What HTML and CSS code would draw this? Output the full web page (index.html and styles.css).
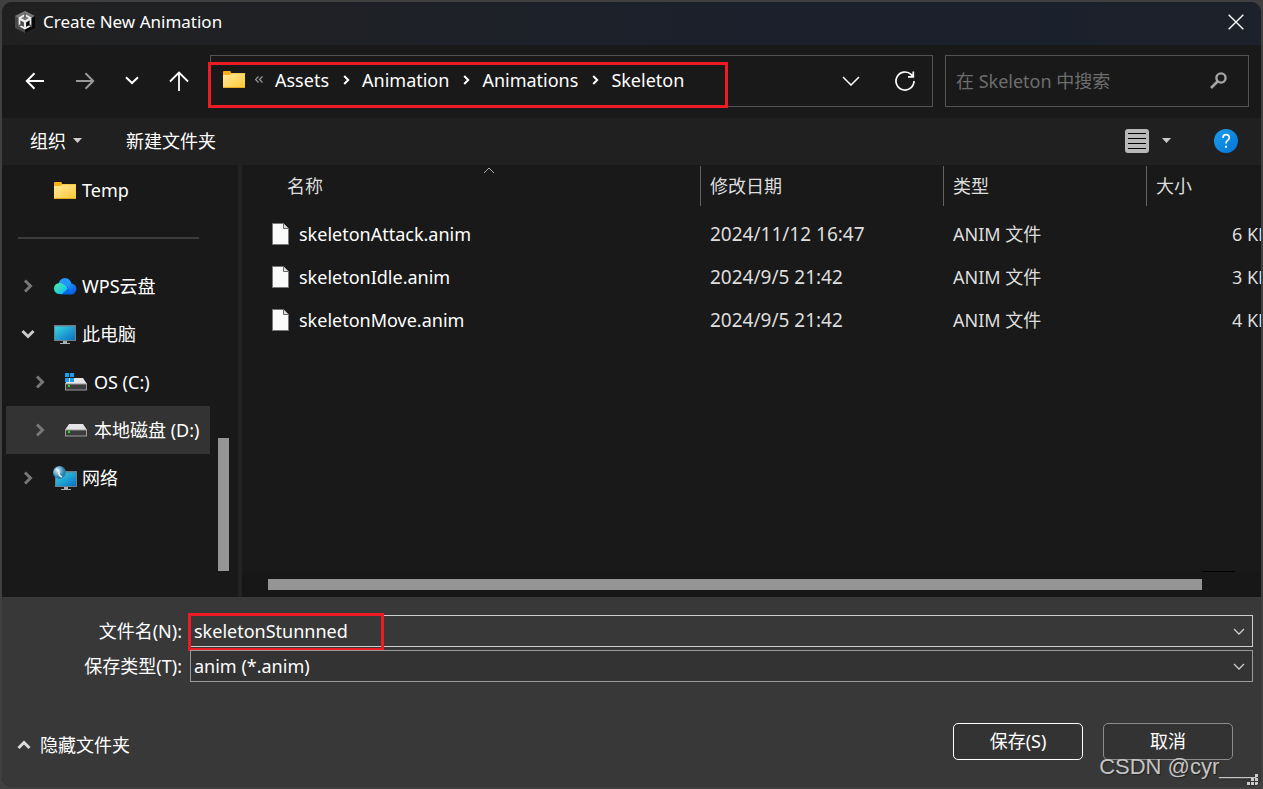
FILE: index.html
```
<!DOCTYPE html>
<html lang="zh-CN">
<head>
<meta charset="utf-8">
<title>Create New Animation</title>
<link rel="stylesheet" href="styles.css">
</head>
<body>
<svg class="defs" aria-hidden="true">
  <defs>
    <linearGradient id="gFolder" x1="0" y1="0" x2="1" y2="1"><stop offset="0" stop-color="#ffe9a0"/><stop offset="1" stop-color="#ffc832"/></linearGradient>
    <linearGradient id="gScreen" x1="0" y1="0" x2="1" y2="1"><stop offset="0" stop-color="#38d6e4"/><stop offset="1" stop-color="#0a6fc2"/></linearGradient>
    <linearGradient id="gHelp" x1="0" y1="0" x2="1" y2="1"><stop offset="0" stop-color="#1aa0ee"/><stop offset="1" stop-color="#0672d4"/></linearGradient>
    <linearGradient id="gCloudL" x1="0" y1="0" x2="1" y2="1"><stop offset="0" stop-color="#4df0a0"/><stop offset="1" stop-color="#08b6ff"/></linearGradient>
    <linearGradient id="gCloudR" x1="0" y1="0" x2="1" y2="1"><stop offset="0" stop-color="#2aa8ff"/><stop offset="1" stop-color="#0048d8"/></linearGradient>
    <radialGradient id="gGlobe" cx=".35" cy=".35"><stop offset="0" stop-color="#d8f0fa"/><stop offset="1" stop-color="#2a7fb0"/></radialGradient>
    <symbol id="folder" viewBox="0 0 22 17"><path d="M0 16V1q0-1 1-1h6q1 0 1 2h14v14z" fill="#f9b115"/><path d="M0 4h7l1-1.500h14V16q0 .8-1 .8H1q-1 0-1-.8z" fill="url(#gFolder)"/><path d="M0 16.500h22" stroke="#e5a91e"/></symbol>
    <symbol id="file" viewBox="0 0 17 22"><path d="M.5.500h11l5 5v16H.500z" fill="#fafafa" stroke="#777"/><path d="M11.500.500v5h5" fill="#ddd" stroke="#666"/></symbol>
    <symbol id="drive" viewBox="0 0 22 13"><path d="M4 0h14l4 6H0z" fill="#e4e4e6"/><path d="M0 5.500h22v7H0z" fill="#9a9a9a"/><path d="M1 6.500h20v5H1z" fill="#3c3c3c"/><path d="M3 7h2v2H3z" fill="#22e022"/></symbol>
    <symbol id="pc" viewBox="0 0 22 19"><path d="M0 0h22v16H0z" fill="#6d7f88"/><path d="M1 1.500h20V15H1z" fill="url(#gScreen)"/><path d="M9 16h4v2h3v1H6v-1h3z" fill="#a8b0b4"/></symbol>
    <symbol id="right" viewBox="0 0 10 14"><path d="M2 1.500l5.500 5.500L2 12.500" fill="none" stroke="currentColor" stroke-width="3"/></symbol>
    <symbol id="down" viewBox="0 0 12 7"><path d="M1 1l5 5 5-5" fill="none" stroke="currentColor" stroke-width="1.300"/></symbol>
    <symbol id="crumb" viewBox="0 0 7 10"><path d="M1.200 1l4 4-4 4" fill="none" stroke="#fff" stroke-width="2"/></symbol>
  </defs>
</svg>
<main class="dialog">
  <header class="titlebar">
    <svg class="logo" width="20" height="22" viewBox="0 0 20 22"><path d="M10 0l10 5v12l-10 5L0 17V5z" fill="#4a4a4a"/><path d="M10 0l10 5-10 6L0 5z" fill="#777"/><path d="M20 5v12l-10 5V11z" fill="#080808"/><path d="M10 4l5.500 3v7.500L10 17.500l-5.500-3V7z" fill="none" stroke="#eee" stroke-width="1.800"/><path d="M10 10.800v6M10 10.800L5 7.800M10 10.800l5-3" fill="none" stroke="#eee" stroke-width="2.200"/><path d="M10 2.500v4M3 15.500l3-1.800M17 15.500l-3-1.800" stroke="#555" stroke-width="1.600"/></svg>
    <h1 class="title">Create New Animation</h1>
    <button class="plain close" aria-label="关闭"><svg width="16" height="16" viewBox="0 0 16 16"><path d="M.7.700l14.600 14.600M15.300.700L.7 15.300" stroke="#fff" stroke-width="1.400"/></svg></button>
  </header>

  <nav class="navbar">
    <div class="nav-buttons">
      <button class="plain" aria-label="返回"><svg width="20" height="18" viewBox="0 0 20 18"><path d="M19 9H2M9.500 1.300L1.800 9l7.700 7.700" fill="none" stroke="#fff" stroke-width="2"/></svg></button>
      <button class="plain" aria-label="前进"><svg width="20" height="18" viewBox="0 0 20 18"><path d="M1 9h17M10.500 1.300L18.200 9l-7.700 7.700" fill="none" stroke="#999" stroke-width="2"/></svg></button>
      <button class="plain" aria-label="最近位置"><svg width="14" height="9" viewBox="0 0 14 9"><path d="M1 1.300l6 5.700 6-5.700" fill="none" stroke="#fff" stroke-width="2"/></svg></button>
      <button class="plain" aria-label="向上"><svg width="20" height="20" viewBox="0 0 20 20"><path d="M10 20V2M1 10.500L10 1.500l9 9" fill="none" stroke="#fff" stroke-width="1.800"/></svg></button>
    </div>
    <div class="address">
      <svg class="address-icon" width="22" height="17"><use href="#folder"/></svg>
      <svg class="more" width="8" height="7" viewBox="0 0 8 7"><path d="M3.500.500l-3 3 3 3M7.500.500l-3 3 3 3" fill="none" stroke="#999" stroke-width="1.200"/></svg>
      <ol class="crumbs">
        <li><a href="#">Assets</a><svg width="7" height="10"><use href="#crumb"/></svg></li>
        <li><a href="#">Animation</a><svg width="7" height="10"><use href="#crumb"/></svg></li>
        <li><a href="#">Animations</a><svg width="7" height="10"><use href="#crumb"/></svg></li>
        <li><a href="#">Skeleton</a></li>
      </ol>
      <button class="plain address-button" aria-label="以前的位置"><svg width="18" height="10" viewBox="0 0 18 10"><path d="M1 1l8 8 8-8" fill="none" stroke="#fff" stroke-width="1.500"/></svg></button>
      <button class="plain address-button" aria-label="刷新"><svg width="20" height="20" viewBox="0 0 20 20"><path d="M19 10a9 9 0 1 1-2.700-6.400L18 5.500M18.300.500v5.300H13" fill="none" stroke="#fff" stroke-width="1.700"/></svg></button>
      <span class="mark mark-path"></span>
    </div>
    <div class="search">
      <input class="search-input" type="search" aria-label="搜索" placeholder="在 Skeleton 中搜索">
      <svg width="17" height="17" viewBox="0 0 17 17"><circle cx="11" cy="6" r="4.600" fill="none" stroke="#a5a5a5" stroke-width="2.400"/><path d="M7.500 9.500L1 16" stroke="#a5a5a5" stroke-width="2.600"/></svg>
    </div>
  </nav>

  <div class="toolbar">
    <button class="plain">组织<svg class="caret" width="9" height="5" viewBox="0 0 9 5"><path d="M0 0h9L4.500 5z" fill="#ccc"/></svg></button>
    <button class="plain new-folder">新建文件夹</button>
    <button class="plain view" aria-label="更改视图"><svg width="24" height="24" viewBox="0 0 24 24"><rect width="24" height="24" rx="3" fill="#b8b8b8"/><path d="M3 4.500h18M3 9.500h18M3 14.500h18M3 19.500h18" stroke="#000"/></svg><svg class="view-caret" width="9" height="5" viewBox="0 0 9 5"><path d="M0 0h9L4.500 5z" fill="#ccc"/></svg></button>
    <button class="plain help" aria-label="帮助"><svg width="24" height="24" viewBox="0 0 24 24"><circle cx="12" cy="12" r="12" fill="url(#gHelp)"/><path d="M9 9q0-3.300 3.100-3.300T15.200 8.800q0 1.600-1.600 2.600T12 14.500" fill="none" stroke="#fff" stroke-width="1.700"/><path d="M11 16.800h2v2h-2z" fill="#fff"/></svg></button>
  </div>

  <div class="content">
    <aside class="sidebar">
      <ul class="tree">
        <li class="node"><span class="twisty"></span><svg class="node-icon" width="22" height="17"><use href="#folder"/></svg>Temp</li>
        <li class="rule" role="separator"></li>
        <li class="node"><svg class="twisty" width="10" height="14"><use href="#right"/></svg><svg class="node-icon" width="23" height="17" viewBox="0 0 23 17"><circle cx="11.500" cy="6.500" r="6.500" fill="#2298ff"/><circle cx="17.500" cy="11" r="5.500" fill="url(#gCloudR)"/><path d="M7 16.500h10L14 8z" fill="#0062e6"/><path d="M6 5q4 0 8.500 5.500L8.500 16H6a5.500 5.500 0 0 1 0-11z" fill="url(#gCloudL)"/></svg>WPS云盘</li>
        <li class="node"><svg class="twisty open" width="14" height="10" viewBox="0 0 14 10"><path d="M1.500 2L7 7.500 12.500 2" fill="none" stroke="currentColor" stroke-width="3"/></svg><svg class="node-icon" width="22" height="19"><use href="#pc"/></svg>此电脑</li>
        <li class="node child"><svg class="twisty" width="10" height="14"><use href="#right"/></svg><svg class="node-icon" width="22" height="18" viewBox="0 0 22 18"><use href="#drive" y="5" width="22" height="13"/><path d="M0 0h4v4H0zM5 0h4v4H5zM0 5h4v4H0zM5 5h4v4H5z" fill="#1c9ff0"/></svg>OS (C:)</li>
        <li class="node child selected"><svg class="twisty" width="10" height="14"><use href="#right"/></svg><svg class="node-icon" width="22" height="13"><use href="#drive"/></svg>本地磁盘 (D:)</li>
        <li class="node"><svg class="twisty" width="10" height="14"><use href="#right"/></svg><svg class="node-icon" width="24" height="24" viewBox="0 0 24 24"><use href="#pc" x="2" y="5" width="22" height="19"/><circle cx="6.500" cy="6.500" r="6.500" fill="url(#gGlobe)"/><path d="M3 3q4 2 3 4t3 4" fill="none" stroke="#e6f6fc" stroke-width="1.500"/></svg>网络</li>
      </ul>
      <div class="v-track"><div class="v-thumb"></div></div>
    </aside>
    <section class="files">
      <table class="file-table">
        <colgroup><col><col class="col-date"><col class="col-type"><col class="col-size"></colgroup>
        <thead>
          <tr><th><div class="head first">名称<svg class="sort" width="12" height="7" viewBox="0 0 12 7"><path d="M1 6l5-5 5 5" fill="none" stroke="#aaa"/></svg></div></th><th><div class="head">修改日期</div></th><th><div class="head">类型</div></th><th><div class="head">大小</div></th></tr>
        </thead>
        <tbody>
          <tr><td><span class="file"><svg width="17" height="22"><use href="#file"/></svg>skeletonAttack.anim</span></td><td class="date">2024/11/12 16:47</td><td>ANIM 文件</td><td class="size">6 KB</td></tr>
          <tr><td><span class="file"><svg width="17" height="22"><use href="#file"/></svg>skeletonIdle.anim</span></td><td class="date">2024/9/5 21:42</td><td>ANIM 文件</td><td class="size">3 KB</td></tr>
          <tr><td><span class="file"><svg width="17" height="22"><use href="#file"/></svg>skeletonMove.anim</span></td><td class="date">2024/9/5 21:42</td><td>ANIM 文件</td><td class="size">4 KB</td></tr>
        </tbody>
      </table>
      <div class="h-track"><div class="h-thumb"></div><div class="h-rest"></div></div>
    </section>
  </div>

  <footer class="footer">
    <div class="fields">
      <label for="filename">文件名(N):</label>
      <div class="combo bright">
        <input id="filename" class="combo-control" type="text" value="skeletonStunnned">
        <svg class="combo-arrow" width="12" height="7"><use href="#down"/></svg>
        <span class="mark mark-name"></span>
      </div>
      <label for="filetype">保存类型(T):</label>
      <div class="combo">
        <select id="filetype" class="combo-control"><option>anim (*.anim)</option></select>
        <svg class="combo-arrow" width="12" height="7"><use href="#down"/></svg>
      </div>
    </div>
    <div class="actions">
      <button class="plain hide-folders"><svg width="14" height="10" viewBox="0 0 14 10"><path d="M1.500 8L7 2.500 12.500 8" fill="none" stroke="#ddd" stroke-width="3"/></svg>隐藏文件夹</button>
      <button class="action primary">保存(S)</button>
      <button class="action">取消</button>
    </div>
    <span class="watermark">CSDN @cyr___</span>
    <svg class="grip" width="11" height="11" viewBox="0 0 11 11"><path d="M8 0h3v3H8zM4 4h3v3H4zM8 4h3v3H8zM0 8h3v3H0zM4 8h3v3H4zM8 8h3v3H8z" fill="#ccc"/></svg>
  </footer>
</main>
</body>
</html>
```
FILE: styles.css
```
* { box-sizing: border-box; }

body {
  margin: 0;
  height: 100vh;
  padding: 2px;
  background: #404040;
  color: #fff;
  font: 18px/24px "Noto Sans", "Noto Sans CJK SC", sans-serif;
}

svg { display: block; flex: none; }
.defs { position: absolute; width: 0; height: 0; }

button, input, select { font: inherit; color: inherit; }

.plain {
  display: flex;
  align-items: center;
  justify-content: center;
  padding: 0;
  border: 0;
  background: none;
}

.dialog {
  display: flex;
  flex-direction: column;
  height: 100%;
  border-radius: 10px;
  overflow: hidden;
  background: #191919;
}

.titlebar {
  display: flex;
  align-items: center;
  gap: 8px;
  height: 43px;
  padding: 0 17px 3px 13px;
  background: linear-gradient(90deg, #202020, #1f2125 25%, #1b202c 60%, #1b212c 85%, #1d212a);
}
.title { margin: 0; font-size: 17px; font-weight: 400; }
.close { margin-left: auto; }

.navbar {
  display: flex;
  align-items: center;
  height: 73px;
  padding: 0 12px 2px 23px;
}
.nav-buttons {
  display: flex;
  justify-content: space-between;
  width: 164px;
  margin-right: 21px;
}

.address {
  position: relative;
  display: flex;
  align-items: center;
  flex: 1;
  height: 52px;
  padding: 0 0 2px 12px;
  border: 1px solid #535353;
}
.more { margin: 0 12px 0 10px; }
.crumbs {
  display: flex;
  flex: 1;
  margin: 0;
  padding: 0;
  list-style: none;
}
.crumbs li { display: flex; align-items: center; }
.crumbs svg { margin: 0 12px 0 14px; }
.crumbs a { color: #fff; text-decoration: none; }
.address-button { width: 54px; height: 48px; padding-top: 2px; }

.mark {
  position: absolute;
  border: 3px solid #ed1c24;
  pointer-events: none;
}
.mark-path { left: -3px; top: 6px; width: 520px; height: 46px; }
.mark-name { left: -3px; top: -3px; width: 196px; height: 38px; }

.search {
  display: flex;
  align-items: center;
  width: 304px;
  height: 52px;
  margin-left: 12px;
  padding: 0 21px 0 10px;
  border: 1px solid #535353;
}
.search-input {
  flex: 1;
  min-width: 0;
  padding: 0;
  border: 0;
  outline: 0;
  background: none;
}
.search-input::placeholder { color: #6e6e6e; }

.toolbar {
  display: flex;
  align-items: center;
  height: 47px;
  padding: 0 23px 2px 28px;
  background: #202020;
}
.caret { margin-left: 7px; }
.new-folder { margin-left: 44px; }
.view { margin-left: auto; }
.view-caret { margin-left: 13px; }
.help { margin-left: 43px; }

.content { display: flex; flex: 1; min-height: 0; }

.sidebar {
  display: flex;
  width: 240px;
  padding: 1px 0 0 4px;
  border-right: 4px solid #232323;
}
.tree {
  width: 204px;
  margin: 0;
  padding: 0;
  list-style: none;
}
.node {
  display: flex;
  align-items: center;
  height: 48px;
  padding-left: 15px;
  white-space: nowrap;
}
.child { padding-left: 27px; }
.selected { background: #333; }
.twisty { width: 14px; color: #777; }
.open { color: #ccc; }
.node-icon { width: 24px; margin: 0 5px 0 18px; }
.child .node-icon { margin-left: 17px; margin-right: 6px; }
.rule {
  height: 48px;
  padding: 23px 11px 0 12px;
}
.rule::before {
  content: "";
  display: block;
  height: 2px;
  background: #3c3c3c;
}
.v-track {
  display: flex;
  flex-direction: column;
  justify-content: flex-end;
  flex: 1;
  padding: 0 9px 26px 8px;
}
.v-thumb { height: 133px; background: #959595; }

.files {
  display: flex;
  flex-direction: column;
  flex: 1;
  min-width: 0;
  overflow: hidden;
}
.file-table {
  width: 100%;
  table-layout: fixed;
  border-collapse: collapse;
  white-space: nowrap;
}
.col-date { width: 243px; }
.col-type { width: 203px; }
.col-size { width: 115px; }
th { height: 47px; padding: 1px 0 0; font-weight: 400; text-align: left; vertical-align: top; color: #dedede; }
td { height: 43px; padding: 0 0 0 10px; color: #dedede; }
.head {
  position: relative;
  height: 40px;
  padding-left: 9px;
  line-height: 40px;
  border-left: 1px solid #636363;
}
.first { padding-left: 45px; border-left: 0; }
.sort { position: absolute; left: 241px; top: 1px; }
.file { display: flex; align-items: center; gap: 10px; padding-left: 20px; color: #fff; }
.date { font-size: 19px; }
.size { padding-left: 86px; }

.h-track {
  display: flex;
  margin-top: auto;
  padding: 0 26px 7px 26px;
  background: #171717;
}
.h-thumb { flex: 1; height: 11px; margin-top: 8px; background: #959595; }
.h-rest { width: 33px; border-top: 1px solid #000; }

.footer {
  position: relative;
  height: 190px;
  padding: 18px 8px 0 16px;
  background: #383838;
}
.fields {
  display: grid;
  grid-template-columns: 164px 1fr;
  gap: 3px 8px;
  align-items: center;
}
.fields label { text-align: right; }
.combo {
  position: relative;
  height: 32px;
  border: 1px solid #999;
  background: #333;
}
.bright { border-color: #ccc; background: #383838; }
.combo-control {
  display: block;
  width: 100%;
  height: 30px;
  padding: 0 32px 1px 3px;
  border: 0;
  outline: 0;
  background: none;
  appearance: none;
}
.combo-arrow { position: absolute; right: 7px; top: 12px; color: #ccc; pointer-events: none; }

.actions {
  display: flex;
  gap: 20px;
  margin-top: 41px;
  padding-right: 20px;
}
.hide-folders { gap: 9px; margin: 7px auto 0 -1px; }
.action {
  width: 130px;
  height: 37px;
  padding: 0 0 2px;
  border: 1px solid #8c8c8c;
  border-radius: 5px;
  background: #333;
}
.primary { border-color: #fff; }
.watermark {
  position: absolute;
  right: 5px;
  bottom: 7px;
  color: #c4c4c4;
  font: 22px/26px "Liberation Sans", sans-serif;
  text-shadow: 1px 1px 1px #222;
}
.grip { position: absolute; right: 3px; bottom: 2px; }
```
